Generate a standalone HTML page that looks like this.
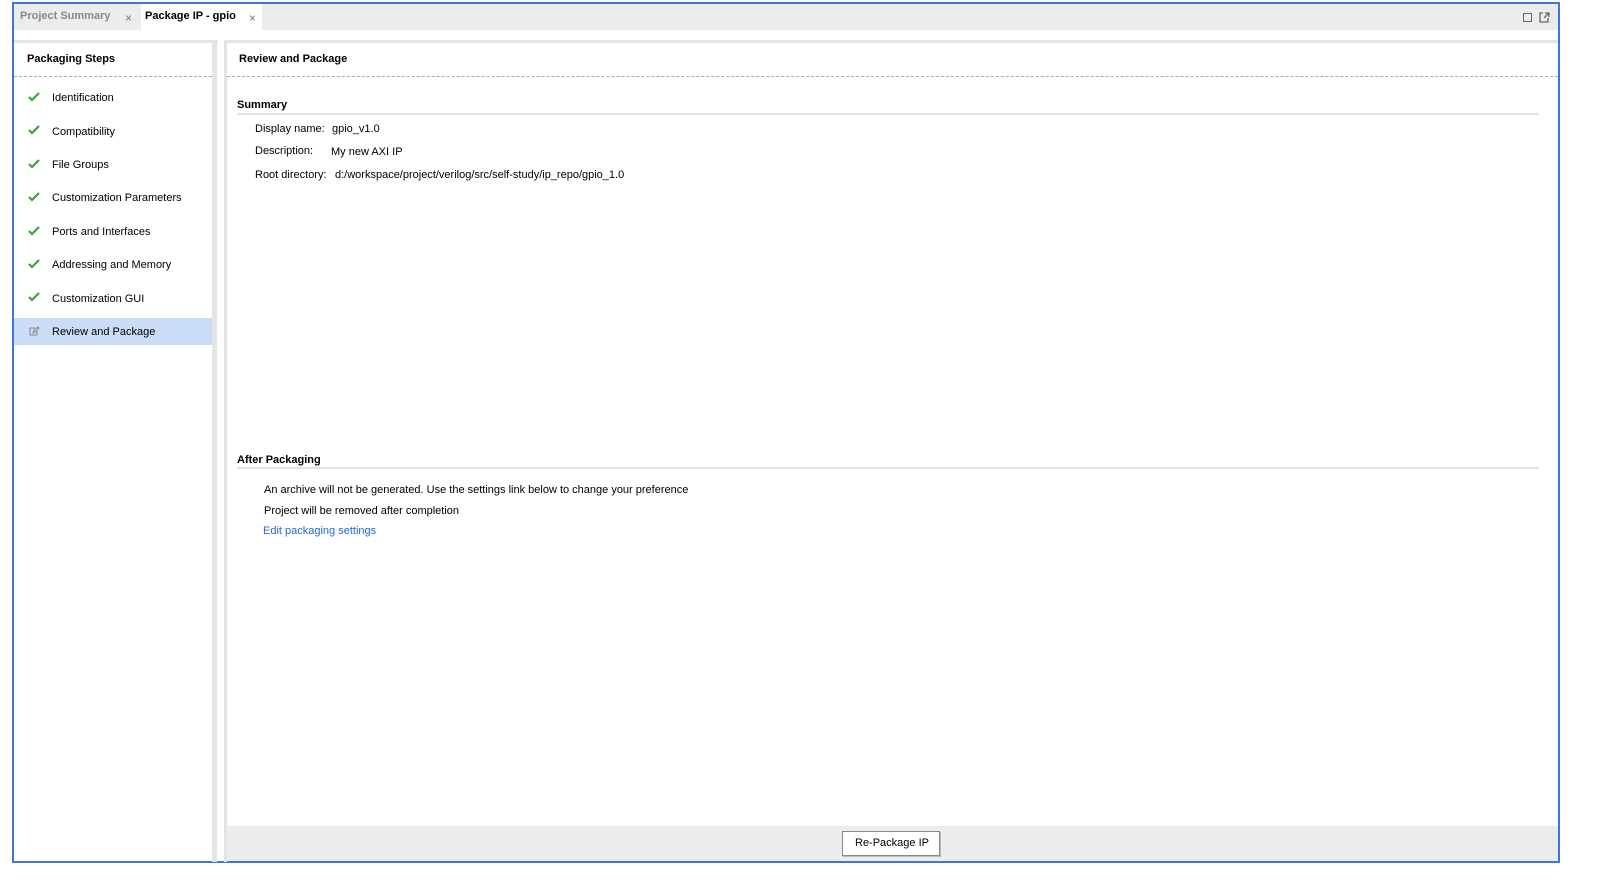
<!DOCTYPE html>
<html><head><meta charset="utf-8"><style>
*{margin:0;padding:0;box-sizing:border-box}
body{width:1600px;height:884px;background:#fff;position:relative;font-family:"Liberation Sans",Arial,sans-serif;font-size:11px;color:#000;overflow:hidden}
.a{position:absolute}
.frame{left:12px;top:2px;width:1548px;height:861px;border:2px solid #3c78d0;background:#fff}
.tabbar{left:14px;top:4px;width:1544px;height:26px;background:#ececec}
.t{position:absolute;white-space:nowrap}
.b{font-weight:bold}
.chk{position:absolute;left:28px;width:12px;height:10px}
.dash{border-top:1px dashed #aaa;height:0}
</style></head><body>
<div class="a frame"></div>
<div class="a tabbar"></div>
<div class="t b" style="left:20px;top:10px;color:#888">Project Summary</div>
<div class="t" style="left:125px;top:11px;color:#777;font-size:12px">×</div>
<div class="a" style="left:141px;top:4px;width:121px;height:26px;background:#fff"></div>
<div class="t b" style="left:145px;top:10px">Package IP - gpio</div>
<div class="t" style="left:249px;top:11px;color:#777;font-size:12px">×</div>
<div class="a" style="left:1523px;top:13px;width:9px;height:9px;border:1.5px solid #666"></div>
<svg class="a" style="left:1539px;top:12px" width="11" height="11"><path d="M1 2v8h8V6M4 1H1v3M6 1h4v4M10 1L5 6" stroke="#666" stroke-width="1.3" fill="none"/></svg>

<!-- left panel -->
<div class="a" style="left:14px;top:40px;width:204px;height:3px;background:#e4e4e4"></div>
<div class="a" style="left:212px;top:40px;width:5px;height:822px;background:#e4e4e4"></div>
<div class="t b" style="left:27px;top:53px">Packaging Steps</div>
<div class="a dash" style="left:14px;top:76px;width:198px"></div>
<div class="a" style="left:14px;top:318px;width:198px;height:27px;background:#cbdcf8"></div>
<div id="steps"></div>

<!-- right panel -->
<div class="a" style="left:224px;top:40px;width:1334px;height:3px;background:#e4e4e4"></div>
<div class="a" style="left:224px;top:40px;width:3px;height:822px;background:#e4e4e4"></div>
<div class="t b" style="left:239px;top:53px">Review and Package</div>
<div class="a dash" style="left:227px;top:76px;width:1331px"></div>
<div class="t b" style="left:237px;top:99px">Summary</div>
<div class="a" style="left:237px;top:113px;width:1302px;height:2px;background:#e4e4e4"></div>
<div class="t" style="left:255px;top:123px">Display name:</div>
<div class="t" style="left:332px;top:123px">gpio_v1.0</div>
<div class="t" style="left:255px;top:145px">Description:</div>
<div class="t" style="left:331px;top:146px">My new AXI IP</div>
<div class="t" style="left:255px;top:169px">Root directory:</div>
<div class="t" style="left:335px;top:169px">d:/workspace/project/verilog/src/self-study/ip_repo/gpio_1.0</div>
<div class="t b" style="left:237px;top:454px">After Packaging</div>
<div class="a" style="left:237px;top:467px;width:1302px;height:2px;background:#e4e4e4"></div>
<div class="t" style="left:264px;top:484px">An archive will not be generated. Use the settings link below to change your preference</div>
<div class="t" style="left:264px;top:505px">Project will be removed after completion</div>
<div class="t" style="left:263px;top:525px;color:#2266dd">Edit packaging settings</div>
<div class="a" style="left:227px;top:826px;width:1331px;height:35px;background:#ececec"></div>
<div class="a" style="left:842px;top:831px;width:98px;height:25px;border:1px solid #888;background:#fff;box-shadow:1px 1px 0 #bbb"></div>
<div class="t" style="left:855px;top:837px">Re-Package IP</div>

<div class="t" style="left:52px;top:92px">Identification</div>
<div class="t" style="left:52px;top:126px">Compatibility</div>
<div class="t" style="left:52px;top:159px">File Groups</div>
<div class="t" style="left:52px;top:192px">Customization Parameters</div>
<div class="t" style="left:52px;top:226px">Ports and Interfaces</div>
<div class="t" style="left:52px;top:259px">Addressing and Memory</div>
<div class="t" style="left:52px;top:293px">Customization GUI</div>
<div class="t" style="left:52px;top:326px">Review and Package</div>
<svg class="chk" style="top:92px" viewBox="0 0 12 10"><path d="M1 5l3 3 7-7" stroke="#3aa33a" stroke-width="2.2" fill="none"/></svg>
<svg class="chk" style="top:125px" viewBox="0 0 12 10"><path d="M1 5l3 3 7-7" stroke="#3aa33a" stroke-width="2.2" fill="none"/></svg>
<svg class="chk" style="top:159px" viewBox="0 0 12 10"><path d="M1 5l3 3 7-7" stroke="#3aa33a" stroke-width="2.2" fill="none"/></svg>
<svg class="chk" style="top:192px" viewBox="0 0 12 10"><path d="M1 5l3 3 7-7" stroke="#3aa33a" stroke-width="2.2" fill="none"/></svg>
<svg class="chk" style="top:226px" viewBox="0 0 12 10"><path d="M1 5l3 3 7-7" stroke="#3aa33a" stroke-width="2.2" fill="none"/></svg>
<svg class="chk" style="top:259px" viewBox="0 0 12 10"><path d="M1 5l3 3 7-7" stroke="#3aa33a" stroke-width="2.2" fill="none"/></svg>
<svg class="chk" style="top:292px" viewBox="0 0 12 10"><path d="M1 5l3 3 7-7" stroke="#3aa33a" stroke-width="2.2" fill="none"/></svg>
<svg class="a" style="left:29px;top:326px" width="11" height="10"><path d="M1 2h5M1 2v7h7V5M4 7l1-3 4-3 1 1-4 4z" stroke="#888" stroke-width="1" fill="none"/></svg>
</body></html>
